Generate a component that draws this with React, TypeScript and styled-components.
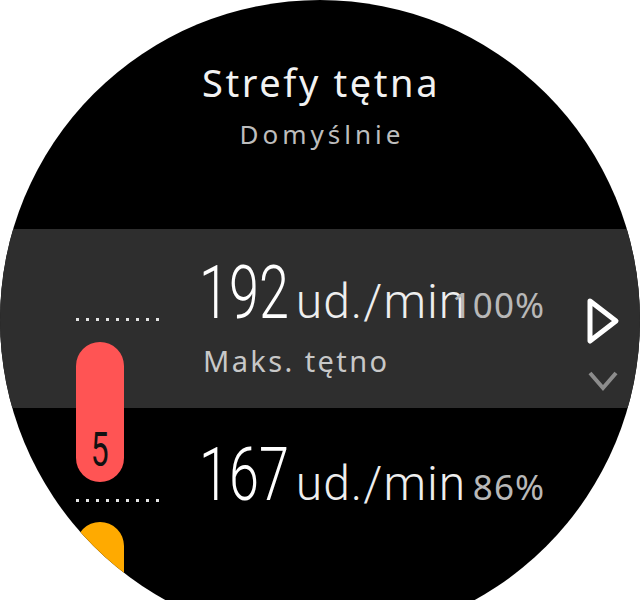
import styled, { createGlobalStyle } from 'styled-components';

const GlobalStyle = createGlobalStyle`
  html, body {
    margin: 0;
    padding: 0;
    background: #fff;
    overflow: hidden;
  }
  body {
    font-family: "Noto Sans", "DejaVu Sans", sans-serif;
  }
`;

const Watch = styled.div`
  width: 640px;
  height: 640px;
  border-radius: 50%;
  background: #000;
  overflow: hidden;
  display: flex;
  flex-direction: column;
`;

const Header = styled.header`
  height: 229px;
  flex-shrink: 0;
  box-sizing: border-box;
  padding-top: 60px;
  display: flex;
  flex-direction: column;
  align-items: center;
`;

const Title = styled.h1`
  margin: 0;
  padding-left: 2px;
  font-size: 38px;
  line-height: 44px;
  font-weight: 400;
  letter-spacing: 2.6px;
  color: #f2f2f2;
`;

const Subtitle = styled.div`
  margin-top: 14px;
  padding-left: 4px;
  font-size: 26px;
  line-height: 32px;
  letter-spacing: 4px;
  color: #bdbdbd;
`;

const Zones = styled.div`
  display: grid;
  grid-template-columns: 203px 1fr;
  grid-template-rows: 179px auto;
`;

const Band = styled.div`
  grid-row: 1;
  grid-column: 1 / -1;
  background: #2e2e2e;
`;

const Scale = styled.div`
  grid-row: 1 / span 2;
  grid-column: 1;
  display: flex;
  flex-direction: column;
  padding: 89px 0 0 76px;
`;

const Ticks = styled.div<{ $gap: number }>`
  width: 83px;
  height: 3px;
  margin-top: ${(p) => p.$gap}px;
  background: linear-gradient(to right, #e2e2e2 3px, transparent 3px) 0 0 / 10px 3px repeat-x;
`;

const ZonePill = styled.div<{ $color: string; $gap: number }>`
  width: 48px;
  height: 140px;
  flex-shrink: 0;
  margin-top: ${(p) => p.$gap}px;
  border-radius: 24px;
  background: ${(p) => p.$color};
  box-sizing: border-box;
  padding-bottom: 8px;
  display: flex;
  flex-direction: column;
  justify-content: flex-end;
  align-items: center;
`;

const ZoneNumber = styled.span`
  display: inline-block;
  font-family: Roboto, sans-serif;
  font-size: 49px;
  line-height: 1;
  color: #111;
  transform: scaleX(0.65);
`;

const Row = styled.div<{ $row: number; $top: number }>`
  grid-column: 2;
  grid-row: ${(p) => p.$row};
  display: flex;
  align-items: flex-start;
  padding-top: ${(p) => p.$top}px;
`;

const Readout = styled.div`
  width: 342px;
  display: flex;
  flex-direction: column;
`;

const ValueLine = styled.div`
  display: grid;
  align-items: baseline;
`;

const Reading = styled.div`
  grid-area: 1 / 1;
  display: flex;
  align-items: baseline;
`;

const Bpm = styled.span`
  display: inline-block;
  font-family: Roboto, sans-serif;
  font-weight: 300;
  font-size: 75px;
  line-height: 1;
  color: #fff;
  transform: scaleX(0.72);
  transform-origin: left center;
  margin-left: -4px;
  margin-right: -28px;
`;

const Unit = styled.span`
  font-family: Roboto, sans-serif;
  font-weight: 300;
  font-size: 48px;
  line-height: 1;
  letter-spacing: 1px;
  color: #eee;
`;

const Percent = styled.span`
  grid-area: 1 / 1;
  justify-self: end;
  font-size: 35px;
  line-height: 1;
  letter-spacing: 1px;
  color: #b8b8b8;
`;

const Label = styled.div`
  margin-top: 13px;
  font-size: 29px;
  line-height: 36px;
  letter-spacing: 2.4px;
  color: #c8c8c8;
`;

const Nav = styled.div`
  margin: 42px 0 0 41px;
  display: flex;
  flex-direction: column;
  align-items: center;
  gap: 24px;
`;

function Ruler() {
  return (
    <Scale>
      <Ticks $gap={0} />
      <ZonePill $color="#ff5454" $gap={21}>
        <ZoneNumber>5</ZoneNumber>
      </ZonePill>
      <Ticks $gap={17} />
      <ZonePill $color="#ffaa00" $gap={20} />
    </Scale>
  );
}

export default function App() {
  return (
    <>
      <GlobalStyle />
      <Watch>
        <Header>
          <Title>Strefy tętna</Title>
          <Subtitle>Domyślnie</Subtitle>
        </Header>
        <Zones>
          <Band />
          <Ruler />
          <Row $row={1} $top={26}>
            <Readout>
              <ValueLine>
                <Reading>
                  <Bpm>192</Bpm>
                  <Unit>ud./min</Unit>
                </Reading>
                <Percent>100%</Percent>
              </ValueLine>
              <Label>Maks. tętno</Label>
            </Readout>
            <Nav>
              <svg width="34" height="48" viewBox="0 0 34 48">
                <polygon points="4,4 30,24 4,44" fill="none" stroke="#fff" strokeWidth="5" strokeLinejoin="round" />
              </svg>
              <svg width="34" height="24" viewBox="0 0 34 24">
                <polyline points="4,4 17,19 30,4" fill="none" stroke="#8c8c8c" strokeWidth="4" />
              </svg>
            </Nav>
          </Row>
          <Row $row={2} $top={29}>
            <Readout>
              <ValueLine>
                <Reading>
                  <Bpm>167</Bpm>
                  <Unit>ud./min</Unit>
                </Reading>
                <Percent>86%</Percent>
              </ValueLine>
            </Readout>
          </Row>
        </Zones>
      </Watch>
    </>
  );
}
